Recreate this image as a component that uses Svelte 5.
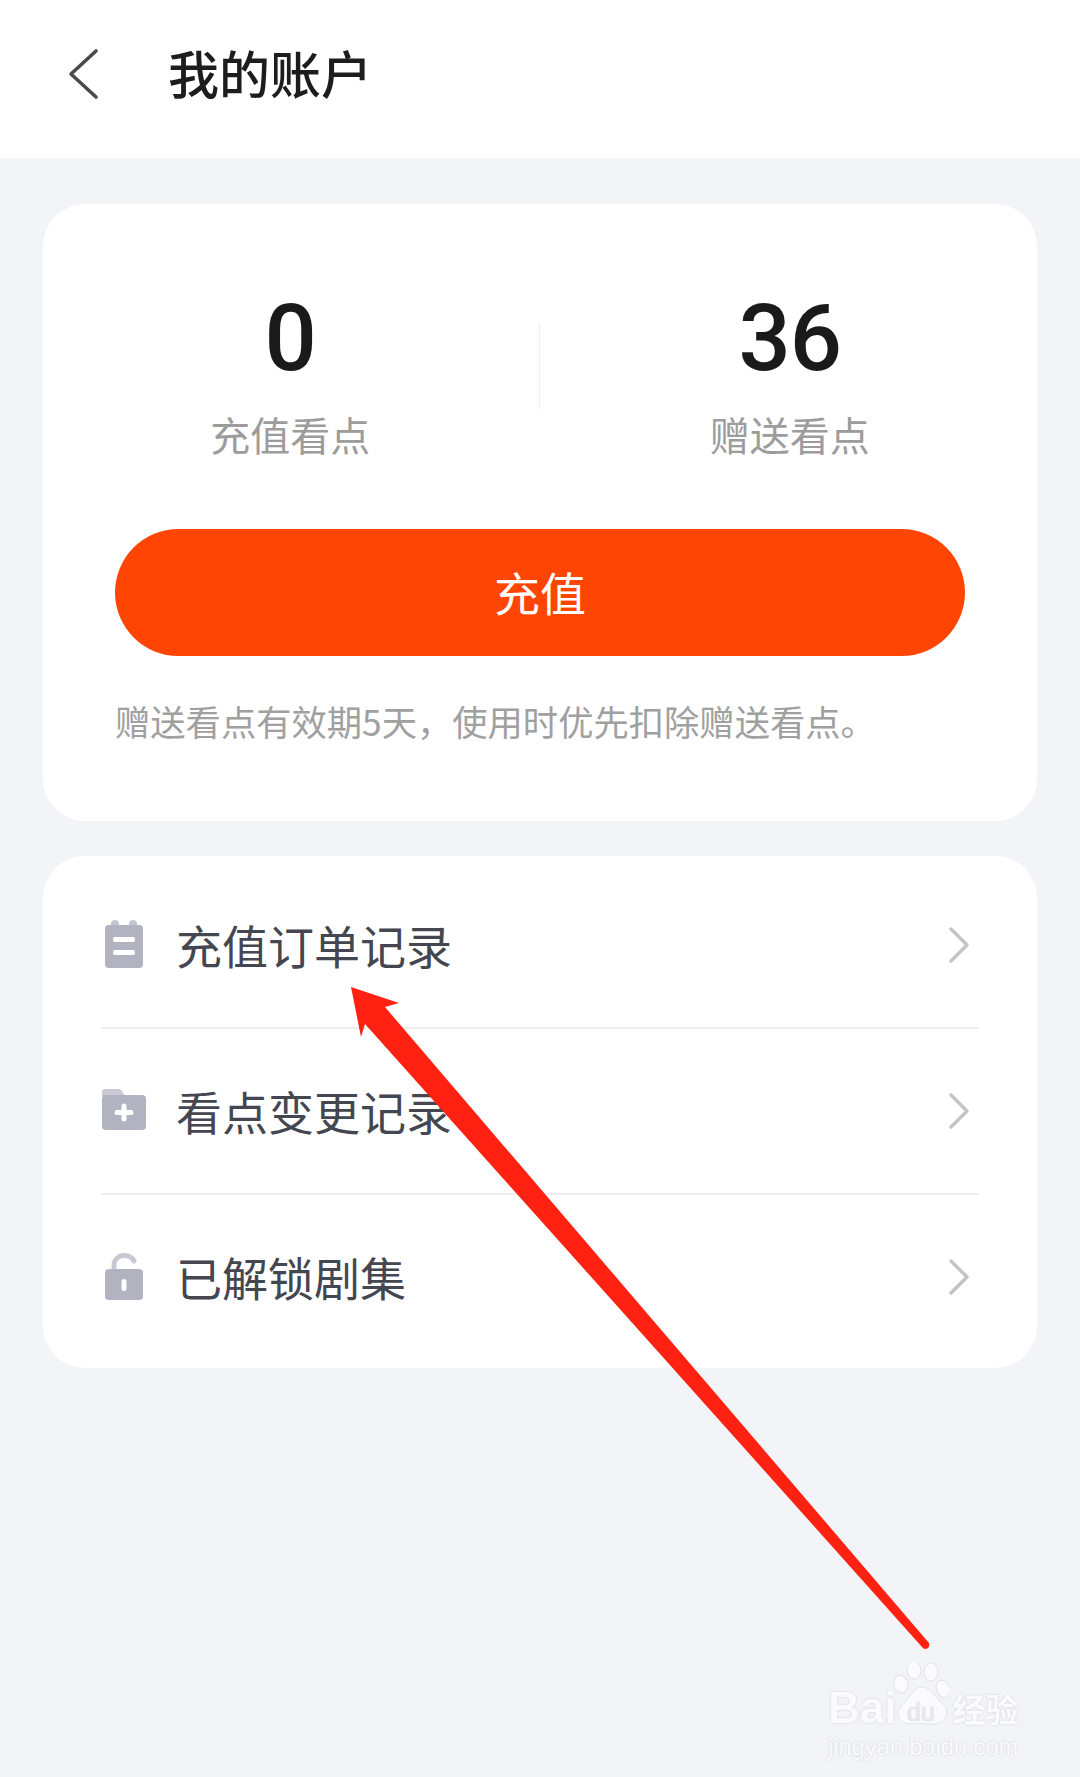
<script lang="ts">
	const rows = [
		{ label: '充值订单记录', icon: 'order' },
		{ label: '看点变更记录', icon: 'folder' },
		{ label: '已解锁剧集', icon: 'lock' }
	];
</script>

<div class="page">
	<header class="header">
		<svg class="back" viewBox="0 0 32 52" width="32" height="52" aria-hidden="true">
			<path d="M29 3 L4 26 L29 49" fill="none" stroke="#4a4a4a" stroke-width="3.6" stroke-linecap="round" stroke-linejoin="round" />
		</svg>
		<h1>我的账户</h1>
	</header>

	<main class="content">
		<section class="card balance">
			<div class="stats">
				<div class="stat">
					<div class="num">0</div>
					<div class="cap">充值看点</div>
				</div>
				<div class="divider"></div>
				<div class="stat">
					<div class="num">36</div>
					<div class="cap">赠送看点</div>
				</div>
			</div>
			<button class="recharge">充值</button>
			<p class="note">赠送看点有效期5天，使用时优先扣除赠送看点。</p>
		</section>

		<section class="card list">
			{#each rows as row}
				<div class="row">
					<span class="icon">
						{#if row.icon === 'order'}
							<svg viewBox="0 0 44 48" width="44" height="48" aria-hidden="true">
								<rect x="9" y="0" width="8" height="10" rx="4" fill="#c3c4cf" />
								<rect x="27" y="0" width="8" height="10" rx="4" fill="#c3c4cf" />
								<rect x="3" y="5" width="38" height="43" rx="4" fill="#b2b3c0" />
								<rect x="11" y="17" width="22" height="5" rx="2" fill="#fff" />
								<rect x="11" y="30" width="22" height="5" rx="2" fill="#fff" />
							</svg>
						{:else if row.icon === 'folder'}
							<svg viewBox="0 0 44 48" width="44" height="48" aria-hidden="true">
								<path d="M0 6 a3 3 0 0 1 3-3 h13 a4 4 0 0 1 4 2 l3 5 H0 Z" fill="#c8c9d3" />
								<rect x="0" y="9" width="44" height="35" rx="4" fill="#b2b3c0" />
								<path d="M22 20 v13 M15 26.500 h14" stroke="#fff" stroke-width="5" stroke-linecap="round" />
							</svg>
						{:else}
							<svg viewBox="0 0 44 48" width="44" height="48" aria-hidden="true">
								<path d="M12 19 V12 a10.500 9.500 0 0 1 20-3" fill="none" stroke="#c8c9d3" stroke-width="5" stroke-linecap="round" />
								<rect x="3" y="17" width="38" height="31" rx="4" fill="#b2b3c0" />
								<rect x="19.500" y="27" width="5" height="12" rx="2.500" fill="#fff" />
							</svg>
						{/if}
					</span>
					<span class="label">{row.label}</span>
					<svg class="chev" viewBox="0 0 22 36" width="22" height="36" aria-hidden="true">
						<path d="M3 2 L19 18 L3 34" fill="none" stroke="#c4c4c8" stroke-width="3.4" stroke-linecap="round" stroke-linejoin="round" />
					</svg>
				</div>
			{/each}
		</section>
	</main>

	<!-- annotation drawn over the screenshot -->
	<svg class="arrow" viewBox="0 0 1080 1777" width="1080" height="1777" aria-hidden="true">
		<path d="M351 987 L399 1003 L385 1007 L929 1643 Q930 1648 926 1649 Q923 1649 922 1647 L365 1024 L361 1037 Z" fill="#ff2212" />
	</svg>

	<div class="watermark">
		<div class="wm-top">
			<span class="bai">Bai</span>
			<svg class="paw" viewBox="0 0 56 66" width="56" height="66" aria-hidden="true">
				<g fill="#fbfbfe" stroke="#e2e3e9" stroke-width="1">
					<ellipse cx="21" cy="8" rx="7" ry="9" />
					<ellipse cx="38" cy="10" rx="7" ry="9" />
					<ellipse cx="8" cy="22" rx="7" ry="9" transform="rotate(-15 8 22)" />
					<ellipse cx="50" cy="27" rx="6.500" ry="9" transform="rotate(-20 50 27)" />
					<path d="M29 25 C38 25 42 36 50 42 C58 50 52 62 40 62 C33 62 25 61 18 62 C6 62 1 52 8 44 C16 37 20 25 29 25 Z" />
				</g>
			</svg>
			<span class="du">du</span>
			<span class="jy">经验</span>
		</div>
		<div class="wm-url">jingyan.baidu.com</div>
	</div>
</div>

<style>
	:global(body) {
		margin: 0;
		background: #f2f4f8;
	}

	.page {
		position: relative;
		width: 1080px;
		height: 1777px;
		overflow: hidden;
		background: #f2f4f8;
		font-family: 'Noto Sans CJK SC', 'Noto Sans', sans-serif;
	}

	.header {
		height: 158px;
		background: #fff;
		display: flex;
		align-items: center;
		padding-left: 67px;
		box-sizing: border-box;
	}

	.back {
		flex: none;
		margin-top: -10px;
	}

	h1 {
		margin: -13px 0 0 69px;
		font-size: 51px;
		font-weight: 500;
		line-height: 1;
		color: #1d1d1d;
	}

	.content {
		display: flex;
		flex-direction: column;
		gap: 35px;
		padding: 46px 43px 0;
	}

	.card {
		background: #fff;
		border-radius: 42px;
	}

	.balance {
		height: 617px;
		box-sizing: border-box;
		padding: 90px 72px 0;
	}

	.stats {
		display: flex;
		align-items: flex-start;
		height: 164px;
		margin: 0 -74px;
	}

	.stat {
		flex: 1;
		display: flex;
		flex-direction: column;
		align-items: center;
	}

	.num {
		font-family: Roboto, sans-serif;
		font-size: 92px;
		font-weight: 500;
		line-height: 90px;
		color: #1a1a1a;
		letter-spacing: -1px;
	}

	.cap {
		margin-top: 24px;
		font-size: 40px;
		line-height: 52px;
		color: #9c9c9c;
	}

	.divider {
		flex: none;
		width: 1px;
		height: 86px;
		background: #eeeeee;
		margin: 29px 1px 0 -1px;
	}

	.recharge {
		display: block;
		width: 850px;
		height: 127px;
		margin-top: 71px;
		padding: 0 0 3px;
		border: none;
		border-radius: 64px;
		background: #ff4503;
		color: #fff;
		font-family: inherit;
		font-size: 46px;
		line-height: 1;
	}

	.note {
		margin: 40px 0 0;
		font-size: 35.300px;
		line-height: 50px;
		color: #a0a0a0;
		white-space: nowrap;
	}

	.list {
		height: 512px;
		box-sizing: border-box;
		padding: 7px 58px 0 58px;
	}

	.row {
		height: 166px;
		display: flex;
		align-items: center;
		border-bottom: 2px solid #eeeeee;
		box-sizing: border-box;
		position: relative;
	}

	.row:last-child {
		border-bottom-color: transparent;
	}

	.icon {
		flex: none;
		width: 44px;
		height: 48px;
		margin-left: 1px;
		margin-top: -2px;
	}

	.icon svg {
		display: block;
	}

	.label {
		margin-left: 30px;
		margin-top: -3px;
		font-size: 46px;
		line-height: 1;
		color: #444650;
	}

	.chev {
		margin-left: auto;
		margin-right: 9px;
	}

	.arrow {
		position: absolute;
		left: 0;
		top: 0;
		pointer-events: none;
	}

	.watermark {
		position: absolute;
		left: 828px;
		top: 1662px;
		width: 200px;
		color: #fbfbfe;
		text-shadow: 0 0 2px #c9cad2;
	}

	.wm-top {
		display: flex;
		align-items: flex-end;
		height: 66px;
	}

	.bai {
		font-family: 'Liberation Sans', sans-serif;
		font-size: 44px;
		font-weight: 700;
		line-height: 40px;
		margin-right: -2px;
	}

	.paw {
		flex: none;
		margin-left: -1px;
	}

	.du {
		position: absolute;
		left: 79px;
		top: 37px;
		font-family: 'Liberation Sans', sans-serif;
		font-size: 25px;
		line-height: 26px;
		color: #eaebf0;
		text-shadow: 0 0 1px #b8b9c2;
	}

	.jy {
		font-size: 33px;
		font-weight: 700;
		line-height: 40px;
		white-space: nowrap;
		margin-left: 3px;
	}

	.wm-url {
		margin-top: 6px;
		font-family: 'Liberation Sans', sans-serif;
		font-size: 23.600px;
		line-height: 26px;
		white-space: nowrap;
	}
</style>
